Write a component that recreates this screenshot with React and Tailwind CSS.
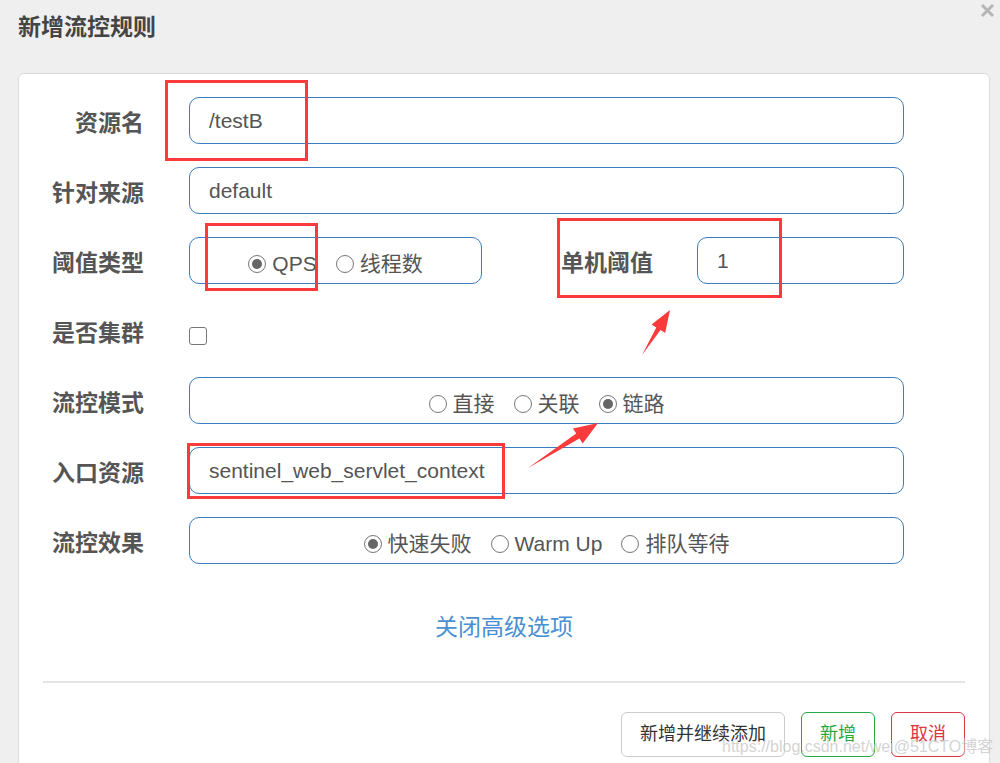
import React from "react";

const font = { fontFamily: '"Liberation Sans", "Noto Sans CJK SC", sans-serif' };

function Radio({ checked, label }) {
  return (
    <span className="flex items-center gap-[6px]">
      <span className="flex h-[18px] w-[18px] items-center justify-center rounded-full border border-[#777] bg-white">
        {checked && <span className="h-[10px] w-[10px] rounded-full bg-[#666]" />}
      </span>
      <span>{label}</span>
    </span>
  );
}

function Row({ label, children }) {
  return (
    <div className="flex h-[47px] items-center">
      <div className="w-[125px] shrink-0 pt-[6px] text-right text-[23px] font-bold text-[#555]">{label}</div>
      <div className="ml-[45px] flex h-full flex-1 items-center">{children}</div>
    </div>
  );
}

const box = "h-full rounded-[10px] border border-[#3a7cc0] bg-white";
const radios = "flex items-center justify-center gap-[19px] pt-[7px]";

export default function App() {
  return (
    <div className="relative h-[763px] w-[1000px] overflow-hidden bg-[#efefef]" style={font}>
      <div className="flex h-[73px] items-start pl-[18px] pt-[10px]">
        <h3 className="text-[23px] font-bold text-[#444]">新增流控规则</h3>
      </div>
      <svg className="absolute left-[980px] top-[3px]" width="15" height="15" viewBox="0 0 15 15">
        <path d="M2 2 L13 13 M13 2 L2 13" stroke="#b5b5b5" strokeWidth="3" />
      </svg>

      <div className="ml-[18px] h-[760px] w-[972px] rounded-[6px] border border-[#dcdcdc] bg-white pt-[23px]">
        <div className="flex flex-col gap-[23px] pr-[85px] text-[21px] text-[#555]">
          <Row label="资源名">
            <div className={`${box} flex w-full items-center pl-[19px]`}>/testB</div>
          </Row>
          <Row label="针对来源">
            <div className={`${box} flex w-full items-center pl-[19px]`}>default</div>
          </Row>
          <Row label="阈值类型">
            <div className={`${box} ${radios} w-[293px]`}>
              <Radio checked label="QPS" />
              <Radio label="线程数" />
            </div>
            <div className="ml-[79px] w-[136px] shrink-0 pt-[6px] text-[23px] font-bold text-[#555]">单机阈值</div>
            <div className={`${box} flex flex-1 items-center pl-[19px]`}>1</div>
          </Row>
          <Row label="是否集群">
            <span className="mt-[10px] h-[18px] w-[18px] rounded-[3px] border border-[#777] bg-white" />
          </Row>
          <Row label="流控模式">
            <div className={`${box} ${radios} w-full`}>
              <Radio label="直接" />
              <Radio label="关联" />
              <Radio checked label="链路" />
            </div>
          </Row>
          <Row label="入口资源">
            <div className={`${box} flex w-full items-center pl-[19px]`}>sentinel_web_servlet_context</div>
          </Row>
          <Row label="流控效果">
            <div className={`${box} ${radios} w-full`}>
              <Radio checked label="快速失败" />
              <Radio label="Warm Up" />
              <Radio label="排队等待" />
            </div>
          </Row>
        </div>

        <div className="mt-[47px] text-center text-[23px] leading-[32px] text-[#4a8fd1]">关闭高级选项</div>

        <div className="mx-[24px] mt-[38px] h-[2px] bg-[#e5e5e5]" />

        <div className="mt-[29px] flex justify-end gap-[16px] pr-[24px] text-[18px]">
          <button className="h-[45px] w-[164px] rounded-[6px] border border-[#ccc] bg-white text-[#333]">新增并继续添加</button>
          <button className="h-[45px] w-[74px] rounded-[6px] border border-[#28a745] bg-white text-[#28a745]">新增</button>
          <button className="h-[45px] w-[74px] rounded-[6px] border border-[#dc3545] bg-white text-[#dc3545]">取消</button>
        </div>
      </div>

      {/* annotations */}
      <div className="absolute left-[165px] top-[80px] h-[81px] w-[143px] border-[3px] border-[#fb3b3b]" />
      <div className="absolute left-[205px] top-[223px] h-[68px] w-[113px] border-[3px] border-[#fb3b3b]" />
      <div className="absolute left-[557px] top-[218px] h-[80px] w-[225px] border-[3px] border-[#fb3b3b]" />
      <div className="absolute left-[187px] top-[443px] h-[56px] w-[318px] border-[3px] border-[#fb3b3b]" />
      <svg className="absolute left-0 top-0" width="1000" height="763">
        <polygon fill="#fb3b3b" points="642,355 656.3,327.4 651.6,324.5 670,310 665.2,332.9 660.5,330" />
        <polygon fill="#fb3b3b" points="528,468 576.2,433.5 572.9,428.4 598,423 582.7,443.6 579.4,438.5" />
      </svg>
      <div className="absolute left-[722px] top-[735px] text-[16px] text-[#c8c8c8]/80">https://blog.csdn.net/wei@51CTO博客</div>
    </div>
  );
}
